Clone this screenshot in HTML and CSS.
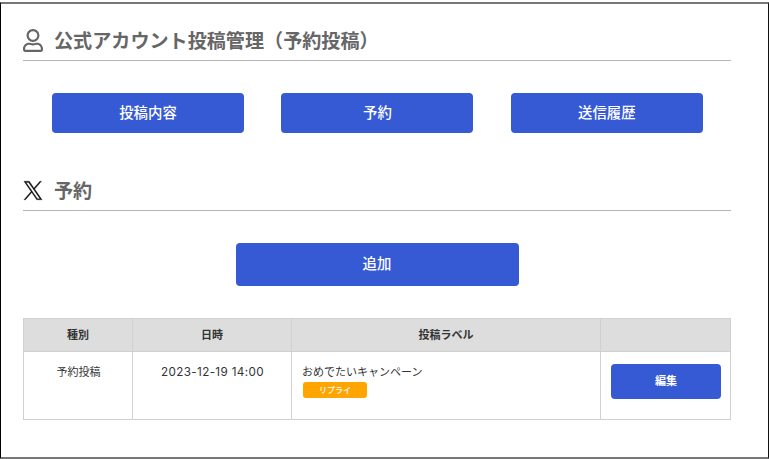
FILE: index.html
```html
<!DOCTYPE html>
<html lang="ja">
<head>
    <meta charset="UTF-8">
    <meta name="viewport" content="width=device-width, initial-scale=1.0">
    <title>公式アカウント投稿管理（予約投稿）</title>
    <link rel="stylesheet" href="styles.css">
</head>
<body>
    <div class="frame">
        <h1 class="heading">
            <svg class="icon-user" viewBox="0 0 448 512" width="20" height="23">
                <path d="M313.6 304c-28.7 0-42.5 16-89.6 16-47.1 0-60.8-16-89.6-16C60.2 304 0 364.2 0 438.4V464c0 26.5 21.5 48 48 48h352c26.5 0 48-21.5 48-48v-25.6c0-74.2-60.2-134.4-134.4-134.4zM400 464H48v-25.6c0-47.6 38.8-86.4 86.4-86.4 14.6 0 38.3 16 89.6 16 51.7 0 74.9-16 89.6-16 47.6 0 86.4 38.8 86.4 86.4V464zM224 288c79.5 0 144-64.5 144-144S303.5 0 224 0 80 64.5 80 144s64.5 144 144 144zm0-240c52.9 0 96 43.1 96 96s-43.1 96-96 96-96-43.1-96-96 43.1-96 96-96z"/>
            </svg>
            <span>公式アカウント投稿管理（予約投稿）</span>
        </h1>

        <div class="menu">
            <a class="btn">投稿内容</a>
            <a class="btn">予約</a>
            <a class="btn">送信履歴</a>
        </div>

        <h2 class="heading">
            <svg class="icon-x" viewBox="-60 -20 1320 1267" width="20" height="21">
                <path d="M714 519L1161 0H1055L667 451L357 0H0L469 682L0 1227H106L516 750L843 1227H1200L714 519ZM569 688L521 620L144 80H307L612 516L660 584L1055 1150H892L569 688Z"/>
            </svg>
            <span>予約</span>
        </h2>

        <a class="btn btn-add">追加</a>

        <table class="list">
            <thead>
                <tr>
                    <th class="col-type">種別</th>
                    <th class="col-date">日時</th>
                    <th class="col-label">投稿ラベル</th>
                    <th class="col-edit"></th>
                </tr>
            </thead>
            <tbody>
                <tr>
                    <td class="center">予約投稿</td>
                    <td class="center date">2023-12-19 14:00</td>
                    <td>おめでたいキャンペーン<span class="tag">リプライ</span></td>
                    <td><a class="btn btn-edit">編集</a></td>
                </tr>
            </tbody>
        </table>
    </div>
</body>
</html>
```
FILE: styles.css
```css
* {
    margin: 0;
    padding: 0;
    box-sizing: border-box;
}

body {
    font-family: "Noto Sans CJK JP", sans-serif;
    background-color: #fff;
    color: #333;
    height: 459px;
    padding-top: 2px;
    overflow: hidden;
}

.frame {
    height: 457px;
    padding: 17px 37px 0 22px;
    border-style: solid;
    border-width: 2px 1px 2px 1px;
    border-color: #777 #111 #777 #000;
}

.heading {
    display: flex;
    align-items: center;
    gap: 11px;
    height: 40px;
    border-bottom: 1px solid #b5b5b5;
    color: #666;
    font-size: 19.1px;
    line-height: 38px;
}

.heading span {
    margin-bottom: 2px;
}

.icon-user {
    fill: #666;
}

.icon-x {
    fill: #111;
    stroke: #111;
    stroke-width: 20;
}

.btn {
    display: block;
    background-color: #3659d4;
    border-radius: 4px;
    color: #fff;
    font-size: 14.4px;
    font-weight: 500;
    line-height: 38px;
    text-align: center;
}

.menu {
    display: flex;
    gap: 37.4px;
    margin: 32px 0 38px 29px;
}

.menu .btn {
    width: 192px;
    height: 40px;
}

.btn-add {
    width: 283px;
    height: 43px;
    margin: 32px auto;
    line-height: 40px;
}

.list {
    width: 708px;
    table-layout: fixed;
    border-collapse: collapse;
    font-size: 11px;
    line-height: 18px;
}

.list th,
.list td {
    border: 1px solid #d0d0d0;
}

.list th {
    height: 33px;
    padding-bottom: 2px;
    background-color: #ddd;
}

.list td {
    height: 68px;
    padding: 10px 9px 0 10px;
    vertical-align: top;
}

.col-type {
    width: 109px;
}

.col-date {
    width: 159px;
}

.col-label {
    width: 309px;
}

.list .center {
    text-align: center;
}

.list .date {
    padding-top: 11px;
    font-family: "Inter", "Noto Sans CJK JP", sans-serif;
    font-size: 11.7px;
    letter-spacing: 0.35px;
}

.tag {
    display: block;
    width: 64px;
    height: 16px;
    margin-top: 2px;
    margin-left: 1px;
    background-color: #ffa500;
    border-radius: 3px;
    color: #fff;
    font-size: 8px;
    font-weight: 500;
    line-height: 15px;
    text-align: center;
}

.list .btn-edit {
    height: 35px;
    margin-top: 2px;
    font-size: 11px;
    font-weight: bold;
    line-height: 33px;
}
```
